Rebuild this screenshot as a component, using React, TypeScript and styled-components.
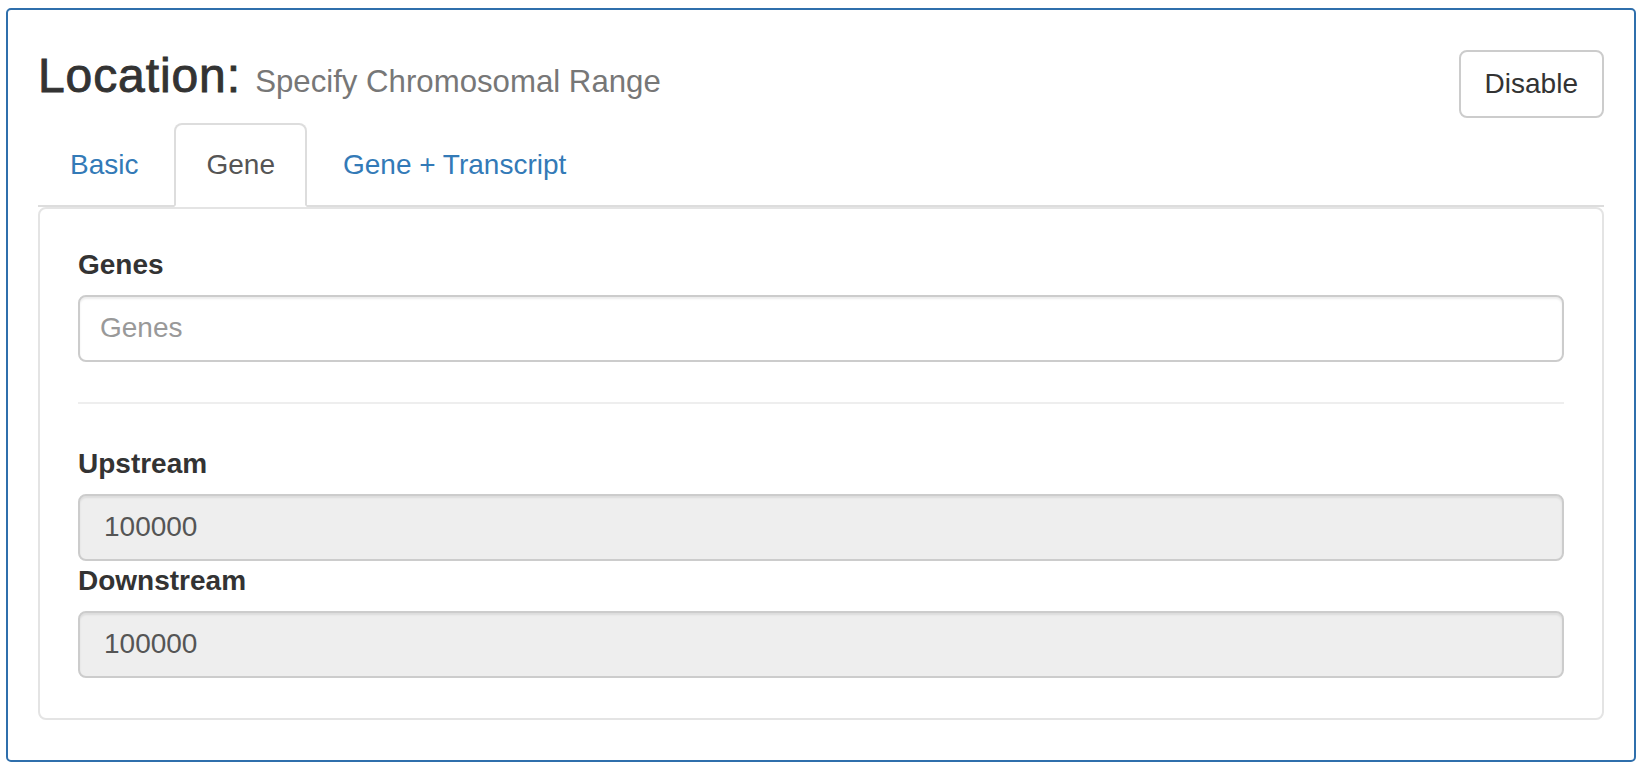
import styled, { createGlobalStyle } from "styled-components";

/* ── Global ── */

const GlobalStyle = createGlobalStyle`
  html, body {
    margin: 0;
    padding: 0;
    background: #fff;
  }
  body {
    font-family: "Liberation Sans", Arial, sans-serif;
    font-size: 28px;
    line-height: 40px;
    color: #333;
  }
  * {
    box-sizing: border-box;
  }
`;

/* ── Styled ── */

const Page = styled.div`
  padding: 8px 8px 0 6px;
`;

const Box = styled.section`
  border: 2px solid #2f6fac;
  border-radius: 5px;
  padding: 0 30px 40px 30px;
`;

const Header = styled.div`
  display: flex;
  justify-content: space-between;
  align-items: flex-start;
  height: 52.8px;
  margin: 40px 0 20px 0;
`;

const Title = styled.h3`
  margin: 0;
  font-size: 48px;
  line-height: 1.1;
  font-weight: 400;
  letter-spacing: 0.9px;
  -webkit-text-stroke: 0.9px #333;
  color: #333;
`;

const Subtitle = styled.small`
  font-size: 65%;
  font-weight: 400;
  letter-spacing: 0;
  -webkit-text-stroke: 0;
  color: #777;
`;

const Button = styled.button`
  font-family: inherit;
  font-size: 28px;
  line-height: 40px;
  padding: 12px 24px;
  color: #333;
  background: #fff;
  border: 2px solid #ccc;
  border-radius: 8px;
  cursor: pointer;
`;

const Tabs = styled.ul`
  display: flex;
  list-style: none;
  margin: 0;
  padding: 0;
  border-bottom: 2px solid #ddd;
`;

const Tab = styled.li<{ $active?: boolean }>`
  margin: 0 4px -2px 0;
  padding: 20px 30px;
  line-height: 40px;
  font-size: 28px;
  border: 2px solid ${(p) => (p.$active ? "#ddd" : "transparent")};
  border-bottom-color: transparent;
  border-radius: 8px 8px 0 0;
  background: ${(p) => (p.$active ? "#fff" : "transparent")};
  color: ${(p) => (p.$active ? "#555" : "#337ab7")};
  cursor: pointer;
`;

const Panel = styled.div`
  border: 2px solid #e4e4e4;
  border-radius: 8px;
  padding: 36px 38px 40px 38px;
`;

const FormGroup = styled.div<{ $spaced?: boolean }>`
  margin-bottom: ${(p) => (p.$spaced ? "30px" : "0")};
`;

const Label = styled.label`
  display: block;
  font-weight: 700;
  margin-bottom: 10px;
  color: #333;
`;

const Input = styled.input<{ $pad?: number }>`
  display: block;
  width: 100%;
  height: 67px;
  padding: 0 ${(p) => p.$pad ?? 24}px;
  font-family: inherit;
  font-size: 28px;
  color: #555;
  background: #fff;
  border: 2px solid #ccc;
  border-radius: 8px;
  box-shadow: inset 0 2px 2px rgba(0, 0, 0, 0.075);
  outline: none;

  &::placeholder {
    color: #999;
  }

  &:disabled {
    background: #eee;
    color: #555;
    opacity: 1;
  }
`;

const Divider = styled.hr`
  margin: 40px 0;
  border: 0;
  border-top: 2px solid #eee;
`;

/* ── Page ── */

const tabs = ["Basic", "Gene", "Gene + Transcript"];

export default function App() {
  return (
    <Page>
      <GlobalStyle />
      <Box>
        <Header>
          <Title>
            Location: <Subtitle>Specify Chromosomal Range</Subtitle>
          </Title>
          <Button>Disable</Button>
        </Header>

        <Tabs>
          {tabs.map((t) => (
            <Tab key={t} $active={t === "Gene"}>
              {t}
            </Tab>
          ))}
        </Tabs>

        <Panel>
          <FormGroup $spaced>
            <Label>Genes</Label>
            <Input $pad={20} placeholder="Genes" />
          </FormGroup>

          <Divider />

          <FormGroup>
            <Label>Upstream</Label>
            <Input disabled value="100000" readOnly />
          </FormGroup>
          <FormGroup>
            <Label>Downstream</Label>
            <Input disabled value="100000" readOnly />
          </FormGroup>
        </Panel>
      </Box>
    </Page>
  );
}
